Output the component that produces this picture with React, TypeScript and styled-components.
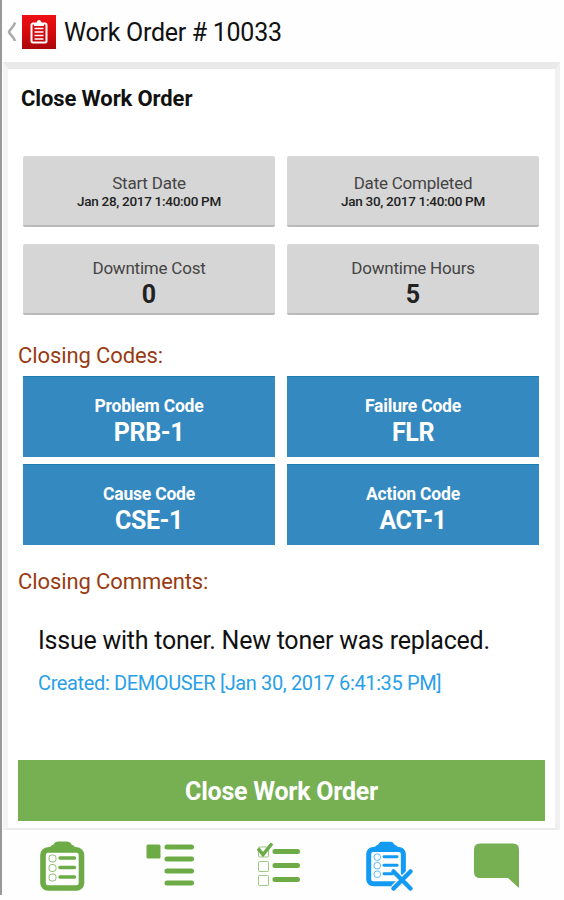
import React from "react";
import styled, { createGlobalStyle } from "styled-components";

const GlobalStyle = createGlobalStyle`
  * { box-sizing: border-box; }
  body { margin: 0; background: #fff; font-family: Roboto, sans-serif; color: #111; }
  button { font: inherit; border: 0; margin: 0; padding: 0; cursor: pointer; }
`;

const Screen = styled.div`
  width: 564px;
  height: 900px;
  padding-bottom: 5px;
  background: #fefefe;
  overflow: hidden;
`;

const Frame = styled.div`
  display: flex;
  flex-direction: column;
  height: 895px;
  border-left: 2px solid #999;
`;

const Header = styled.header`
  display: flex;
  align-items: center;
  height: 62px;
  padding: 2px 0 0 5px;
`;

const AppIcon = styled.svg`
  margin-left: 6px;
`;

const PageTitle = styled.h1`
  margin: 2px 0 0 8px;
  font-size: 25px;
  line-height: 30px;
  font-weight: 400;
  letter-spacing: -0.28px;
  white-space: nowrap;
`;

const Card = styled.main`
  display: flex;
  flex-direction: column;
  width: 557px;
  height: 768px;
  margin-left: 1px;
  padding: 0 10px 0 10px;
  border: solid #e9e9e9;
  border-width: 7px 5px 2px 5px;
  border-left-color: #f4f4f4;
  border-right-color: #f1f1f1;
  border-bottom-color: #ececec;
  background: #fff;
`;

const CardTitle = styled.h2`
  margin: 17px 0 0 3px;
  font-size: 22px;
  line-height: 26px;
  font-weight: 700;
  letter-spacing: -0.12px;
  white-space: nowrap;
`;

const Grid = styled.div<{ $top: number; $gap: number }>`
  display: grid;
  grid-template-columns: 252px 252px;
  gap: ${(p) => p.$gap}px 12px;
  margin: ${(p) => p.$top}px 0 0 5px;
`;

const Tile = styled.button`
  display: flex;
  flex-direction: column;
  align-items: center;
  white-space: nowrap;
`;

const InfoTile = styled(Tile)<{ $large?: boolean }>`
  height: 71px;
  padding-top: ${(p) => (p.$large ? 14 : 17)}px;
  border-radius: 2px;
  border-bottom: 2px solid #b9b9b9;
  background: #d6d6d6;
  color: #222;
`;

const InfoLabel = styled.span`
  font-size: 17px;
  line-height: 20px;
  letter-spacing: -0.22px;
  color: #444;
`;

const InfoValue = styled.span<{ $large?: boolean }>`
  font-size: ${(p) => (p.$large ? 25 : 13.5)}px;
  line-height: ${(p) => (p.$large ? 28 : 16)}px;
  letter-spacing: ${(p) => (p.$large ? 0 : -0.3)}px;
  margin-top: ${(p) => (p.$large ? 3 : 0)}px;
  font-weight: ${(p) => (p.$large ? 700 : 500)};
`;

const CodeTile = styled(Tile)`
  height: 81px;
  padding-top: 19px;
  border-top: 1px solid #1c7bb0;
  background: #3489c0;
  color: #fff;
  font-weight: 700;
`;

const CodeLabel = styled.span`
  font-size: 17.5px;
  line-height: 20px;
  letter-spacing: -0.2px;
`;

const CodeValue = styled.span`
  margin-top: 2px;
  font-size: 25px;
  line-height: 30px;
  letter-spacing: -0.4px;
`;

const SectionTitle = styled.h3<{ $top: number }>`
  margin: ${(p) => p.$top}px 0 0;
  font-size: 22px;
  line-height: 26px;
  font-weight: 400;
  letter-spacing: -0.1px;
  color: #993b12;
  white-space: nowrap;
`;

const Comment = styled.p`
  margin: 31px 0 0 20px;
  font-size: 25px;
  line-height: 30px;
  letter-spacing: -0.24px;
  white-space: nowrap;
`;

const CommentMeta = styled.p`
  margin: 15px 0 0 20px;
  font-size: 20px;
  line-height: 24px;
  letter-spacing: -0.37px;
  color: #2a9fe8;
  white-space: nowrap;
`;

const SubmitButton = styled.button`
  width: 527px;
  height: 61px;
  margin: auto 0 7px 0;
  padding-top: 2px;
  border-radius: 0;
  background: #77b053;
  color: #fff;
  font-size: 25px;
  font-weight: 700;
  letter-spacing: -0.25px;
`;

const TabBar = styled.nav`
  display: flex;
  height: 65px;
  padding-left: 6px;
`;

const Tab = styled.button`
  width: 109px;
  height: 65px;
  background: none;
`;

const GREEN = "#6cab45";
const BLUE = "#139bf3";

function ClipboardList({ color, stroke }: { color: string; stroke: number }) {
  return (
    <>
      <path
        d="M17 8 Q23 6 24.500 3 Q25.500 1.500 28 1.500 H37 Q39.500 1.500 40.500 3 Q42 6 48 8 Z"
        fill={color}
      />
      <rect x="13" y="10" width="38.500" height="38" rx="5" fill="none" stroke={color} strokeWidth="5.600" />
      <rect x="21" y="5.500" width="23" height="6" fill={color} />
      {[18, 27.5, 37].map((y) => (
        <g key={y}>
          <rect x="19" y={y - 3} width="7" height="7" rx="2.800" fill="none" stroke={color} strokeWidth="1" opacity="0.75" />
          <path d={`M30 ${y}H44.500`} stroke={color} strokeWidth={stroke} strokeLinecap="round" />
        </g>
      ))}
    </>
  );
}

const fields = [
  { label: "Start Date", value: "Jan 28, 2017 1:40:00 PM" },
  { label: "Date Completed", value: "Jan 30, 2017 1:40:00 PM" },
  { label: "Downtime Cost", value: "0", large: true },
  { label: "Downtime Hours", value: "5", large: true },
];

const codes = [
  { label: "Problem Code", value: "PRB-1" },
  { label: "Failure Code", value: "FLR" },
  { label: "Cause Code", value: "CSE-1" },
  { label: "Action Code", value: "ACT-1" },
];

export default function App() {
  return (
    <Screen>
      <GlobalStyle />
      <Frame>
        <Header>
          <svg width="9" height="22" viewBox="0 0 9 22" fill="none">
            <path d="M8 1.500 C7 6 3 8 2 11 C3 14 7 16 8 20" stroke="#aaa" strokeWidth="2.500" />
          </svg>
          <AppIcon width="34" height="34" viewBox="0 0 34 34">
            <defs>
              <linearGradient id="red" x1="0" y1="0" x2="0" y2="1">
                <stop offset="0" stopColor="#ee1114" />
                <stop offset="0.6" stopColor="#d0080c" />
                <stop offset="1" stopColor="#a8080b" />
              </linearGradient>
            </defs>
            <rect width="34" height="34" fill="url(#red)" />
            <rect x="9.500" y="8.500" width="15" height="19" rx="1.500" fill="none" stroke="#fff" strokeWidth="2" />
            <path d="M12 11V8H14.500Q15 5 17 5Q19 5 19.500 8H22V11Z" fill="#fff" />
            <path d="M12.500 13.500H21.500M12.500 17H21.500M12.500 20.500H21.500M12.500 24H21.500" stroke="#fff" strokeWidth="1.500" />
          </AppIcon>
          <PageTitle>Work Order # 10033</PageTitle>
        </Header>
        <Card>
          <CardTitle>Close Work Order</CardTitle>
          <Grid $top={44} $gap={17}>
            {fields.map((f) => (
              <InfoTile key={f.label} $large={f.large}>
                <InfoLabel>{f.label}</InfoLabel>
                <InfoValue $large={f.large}>{f.value}</InfoValue>
              </InfoTile>
            ))}
          </Grid>
          <SectionTitle $top={28}>Closing Codes:</SectionTitle>
          <Grid $top={7} $gap={7}>
            {codes.map((c) => (
              <CodeTile key={c.label}>
                <CodeLabel>{c.label}</CodeLabel>
                <CodeValue>{c.value}</CodeValue>
              </CodeTile>
            ))}
          </Grid>
          <SectionTitle $top={24}>Closing Comments:</SectionTitle>
          <Comment>Issue with toner. New toner was replaced.</Comment>
          <CommentMeta>Created: DEMOUSER [Jan 30, 2017 6:41:35 PM]</CommentMeta>
          <SubmitButton>Close Work Order</SubmitButton>
        </Card>
        <TabBar>
          <Tab aria-label="Work order">
            <svg width="109" height="65" viewBox="0 0 109 65">
              <g transform="translate(22 10)">
                <ClipboardList color={GREEN} stroke={3.4} />
              </g>
            </svg>
          </Tab>
          <Tab aria-label="Details">
            <svg width="109" height="65" viewBox="0 0 109 65">
              <rect x="29.500" y="14.500" width="14" height="14" rx="1.500" fill={GREEN} />
              <path d="M50 17H74.500M50 29H74.500M50 41H74.500M50 53H74.500" stroke={GREEN} strokeWidth="5" strokeLinecap="round" />
            </svg>
          </Tab>
          <Tab aria-label="Tasks">
            <svg width="109" height="65" viewBox="0 0 109 65">
              <g fill="none" stroke={GREEN}>
                <rect x="32.500" y="17" width="10" height="10" rx="1" opacity="0.65" />
                <rect x="32.500" y="31.500" width="10" height="10" rx="1" opacity="0.65" />
                <rect x="32.500" y="45.500" width="10" height="10" rx="1" opacity="0.65" />
                <path d="M32 18.500L37 24.500L46 13.500" strokeWidth="3.500" />
                <path d="M49 21.500H71.500M49 35.500H71.500M49 49.500H71.500" strokeWidth="5" strokeLinecap="round" />
              </g>
            </svg>
          </Tab>
          <Tab aria-label="Close">
            <svg width="109" height="65" viewBox="0 0 109 65">
              <g transform="translate(22 10.500) scale(0.9)">
                <ClipboardList color={BLUE} stroke={3.2} />
              </g>
              <path d="M60 43L75 58M75 42L59 58" stroke="#fefefe" strokeWidth="7" />
              <path d="M58.500 41.500L75.500 58.500M75.500 41.500L58.500 58.500" stroke={BLUE} strokeWidth="4.500" strokeLinecap="round" />
            </svg>
          </Tab>
          <Tab aria-label="Comments">
            <svg width="109" height="65" viewBox="0 0 109 65">
              <path d="M36 13.500H69Q75 13.500 75 19.500V58L64 48H36Q30 48 30 42V19.500Q30 13.500 36 13.500Z" fill="#77b053" />
            </svg>
          </Tab>
        </TabBar>
      </Frame>
    </Screen>
  );
}
